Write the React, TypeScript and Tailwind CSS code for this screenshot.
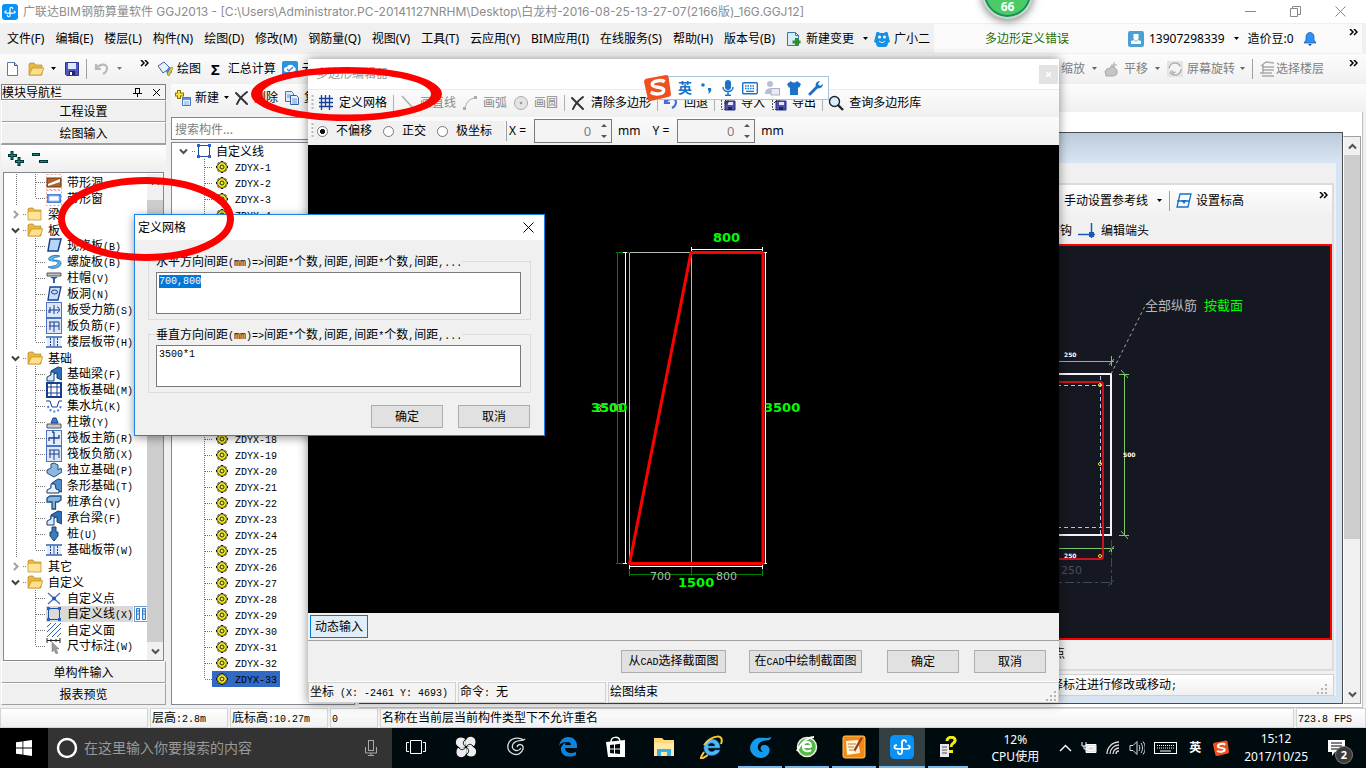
import React, { useEffect, useRef } from "react";

const MONO = /([\x20-\x7e]+)/;

/* Ideographs at 12px with half-width Latin between them. */
function Song({ text }: { text: string }) {
  return (
    <span className="whitespace-pre font-['Noto_Sans_CJK_SC',sans-serif] text-[12px] leading-4">
      {text.split(MONO).map((part, i) =>
        i % 2 ? (
          <span key={i} className="font-['Liberation_Mono',monospace] text-[10px]">{part}</span>
        ) : (
          part
        )
      )}
    </span>
  );
}

function Svg({ w = 16, h = 16, children, className = "" }: { w?: number; h?: number; children: React.ReactNode; className?: string }) {
  return (
    <svg width={w} height={h} viewBox={`0 0 ${w} ${h}`} fill="none" className={`block shrink-0 ${className}`} aria-hidden="true">
      {children}
    </svg>
  );
}

const Caret = ({ color = "#000" }: { color?: string }) => (
  <Svg w={7} h={4}><path d="M1 0h5L3.5 3z" fill={color} /></Svg>
);
const More = () => (
  <Svg w={9} h={7}><path d="M1 0l3 3-3 3M5 0l3 3-3 3" stroke="#000" strokeWidth="1.5" /></Svg>
);
const Sep = () => <span className="block h-5 w-px shrink-0 bg-[#a0a0a0]" />;
const Grip = () => (
  <Svg w={3} h={16}><path d="M1.5 0v16" stroke="#b8b8b8" strokeWidth="2" strokeDasharray="2 2" /></Svg>
);
const Cross = () => (
  <Svg><path d="M2 3l11 11M13 2C9 5 5 9 3 14" stroke="#303438" strokeWidth="2" strokeLinecap="round" /></Svg>
);
const FileIcon = () => (
  <Svg><path d="M2.500 1.500h7l3 3v10h-10z" fill="#fff" stroke="#5b7ba8" /><path d="M9.500 1.500v3h3" fill="#c9dbf3" stroke="#34537e" /></Svg>
);
const FolderIcon = ({ open = false }: { open?: boolean }) => (
  <Svg>
    <path d="M1 3l1-1h4l2 2h6v10H1z" fill="#e9b843" stroke="#b98a28" strokeWidth=".7" />
    {open ? <path d="M1 14L4.500 7H16l-3 7z" fill="#ffe08a" stroke="#bd8b25" strokeWidth=".7" /> : <path d="M1.500 6h12v7.500h-12z" fill="#ffe49a" />}
  </Svg>
);
const SaveIcon = () => (
  <Svg><path d="M1.500 1.500h13v13h-12l-1-1z" fill="#4f57c5" stroke="#30378d" /><path d="M4 2h8v6H4z" fill="#dfe9fb" /><path d="M5 10h6v4H5z" fill="#20255f" /><path d="M6 11h2v3H6z" fill="#fff" /></Svg>
);
const UndoIcon = ({ color = "#b9b9b9" }: { color?: string }) => (
  <Svg><path d="M2 3v5h5M2.500 7.500C5 3 13 2 13 7c0 3-2 5-4 6" stroke={color} strokeWidth="2.200" /></Svg>
);
const CopyIcon = () => (
  <Svg><path d="M1.500 1.500h6l2 2v8h-8z" fill="#dce9fb" stroke="#4474b8" /><path d="M6.500 5.500h6l2 2v7h-8z" fill="#eaf2fd" stroke="#2f5fa8" /><path d="M3 5h3M3 7h3M8 9h5M8 11h5M8 13h5" stroke="#6a93cc" /></Svg>
);
const PaletteIcon = () => (
  <Svg><path d="M1 5l6-4 6 6-7 5z" fill="#eaf1fb" stroke="#3e6396" /><path d="M9 10l3-4 3 5-4 4z" fill="#2f8ee0" /><path d="M10 13l4-7 2 1-4 8z" fill="#e5c34c" stroke="#8a6a10" strokeWidth=".5" /></Svg>
);
const NewPartIcon = () => (
  <Svg><path d="M4 0v9M0 4.500h9" stroke="#8f7400" strokeWidth="4" /><path d="M4 1v7M1 4.500h7" stroke="#f7df3e" strokeWidth="2" /><path d="M7.500 7.500h8v8h-8z" fill="#e8f1ff" stroke="#3f78c8" /><path d="M8 8h7v2H8z" fill="#5c98e6" /><path d="M9 12h5M9 14h5" stroke="#80aade" /></Svg>
);
const CloudCheck = () => (
  <Svg><rect width="16" height="16" rx="2" fill="#2b93dd" /><path d="M2 9c0-3 2-3 3-3 1-3 6-3 7 0 3 1 2 5-1 5H5c-2 0-3-1-3-2z" fill="#fff" /><path d="M5 8l2 2 4-4" stroke="#2b93dd" strokeWidth="1.500" /></Svg>
);
const GridIcon = () => (
  <Svg><path d="M3.500 0v15M7.500 0v12M11.500 0v15M1 3.500h14M1 7.500h14M1 11.500h14" stroke="#173f9d" strokeWidth="1.300" /></Svg>
);
const MagnifierIcon = () => (
  <Svg><circle cx="6.500" cy="6.500" r="5" fill="#d7effb" stroke="#222" strokeWidth="1.400" /><path d="M10 10l5 5" stroke="#222" strokeWidth="2.400" /></Svg>
);
const DiskArrow = ({ out = false }: { out?: boolean }) => (
  <Svg><path d="M1.500 5v9.500H6" stroke="#555" strokeDasharray="2 1" /><path d="M5 6h10v9H5z" fill="#4d50b0" stroke="#2c2f7d" /><path d="M8 7h5v3H8z" fill="#e6e8f8" /><path d="M8 12h4v3H8z" fill="#20225c" /><path d={out ? "M3 8l4-4M4 3h4v4" : "M3 3l4 4M8 4v4H4"} stroke="#333" /></Svg>
);
const GlodonLogo = ({ size = 16 }: { size?: number }) => (
  <svg width={size} height={size} viewBox="0 0 16 16" fill="none" className="block shrink-0" aria-hidden="true">
    <rect width="16" height="16" rx="3" fill="#0a91f5" />
    <path d="M8 11.500V5c0-2.200 2.700-2 2.700-.4M4.200 6.800c-1.700.3-1.700 2.400.3 2.400h7.300c1.800 0 1.800-1.800.4-2.200M5.300 11.200c.3 2.200 2.700 1.800 2.700.2" stroke="#fff" strokeWidth="1.200" strokeLinecap="round" />
  </svg>
);
const SogouLogo = ({ size = 16 }: { size?: number }) => (
  <svg width={size} height={size} viewBox="0 0 28 28" fill="none" className="block shrink-0" aria-hidden="true">
    <path d="M2 5l21-4q2 0 2.500 2L28 21q0 2-2 2.500L7 28q-3 0-3-2L0 8q0-2 2-3z" fill="#f0501e" />
    <path d="M21.500 8c-4-2.500-13-1-13 3 0 4 12.500 1.500 12 6-.4 4.300-9 4.700-13.500 2" stroke="#fff" strokeWidth="3.500" />
  </svg>
);
const Chevron = ({ dir, color = "#505050" }: { dir: "up" | "down" | "right"; color?: string }) => (
  <Svg w={9} h={9}><path d={dir === "up" ? "M1 6.500L4.500 3 8 6.500" : dir === "down" ? "M1 2.500L4.500 6 8 2.500" : "M3 1l3.500 3.500L3 8"} stroke={color} strokeWidth="2" /></Svg>
);

const dark = "#173f8f";
const glyphs: Record<string, React.ReactNode> = {
  hole: <><rect x=".5" y=".5" width="15" height="15" stroke="#e8a090" strokeDasharray="2 2" /><path d="M1 4h14v9H1z" fill="#b0642b" stroke="#6e3610" /><path d="M2 10l12-5v3L2 12z" fill="#fff" /></>,
  window: <><rect x=".5" y=".5" width="15" height="15" stroke="#e8a090" strokeDasharray="2 2" /><path d="M1 4h14v9H1z" fill="#4d80df" /><path d="M3 6h10v5H3z" fill="#fff" stroke="#9fc0f6" /></>,
  slab: <path d="M4 1h11l-3 12H2z" fill="#b7d5f7" stroke={dark} strokeWidth="1.500" />,
  spiral: <path d="M14 2C8 0 1 3 3 6c2 2 9 0 9 3s-6 3-10 4c5 3 13 1 13-4 0-4-8-2-8-4s4-1 7-3z" fill="#58b6ea" stroke="#2166ac" strokeWidth=".8" />,
  cap: <><path d="M1 3h14v3H1z" fill="#bfc4ca" stroke="#555" /><path d="M4 7h8l-3 2v4H7V9z" fill="#2763b5" /></>,
  slabhole: <><path d="M4 1h11l-3 13H2z" fill="#c7ddf8" stroke={dark} strokeWidth="1.300" /><ellipse cx="8.500" cy="6" rx="3" ry="2" stroke={dark} /></>,
  bars: <><rect x=".5" y=".5" width="15" height="15" fill="#dce7fa" stroke="#4b74c4" /><path d="M3 11V8h11M8 3v9M4 5v6M11 5c3 0 3 5 0 6" stroke={dark} /></>,
  frame: <><rect x=".5" y=".5" width="15" height="15" fill="#dce7fa" stroke="#4b74c4" /><path d="M3 4h10M3 8h10M8 4v10M4 4v8M13 4v8" stroke={dark} /></>,
  strip: <><path d="M0 3h16M0 13h16" stroke="#2d5fb4" strokeWidth="1.500" /><path d="M1 4h14v8H1z" fill="#e2ecfc" /><path d="M4.500 4v8M11.500 4v8" stroke={dark} strokeDasharray="2 1" /><path d="M8 4v8" stroke={dark} strokeWidth=".8" /></>,
  beam: <><path d="M5 9V5l7-4 4 1v12l-5-2V7z" fill="#2f6fb5" stroke="#123c77" /><path d="M1 15v-4l4-2V6h3v9z" fill="#dce9f8" stroke="#123c77" /></>,
  raft: <><rect x="1" y="1" width="14" height="14" stroke={dark} strokeWidth="2" /><path d="M5 1v14M11 1v14M1 5h14M1 11h14" stroke={dark} /></>,
  pit: <><path d="M0 3h4l2 6h5l2-6h3" stroke={dark} /><path d="M2 8c1 7 12 8 13-1" stroke="#4a8ad0" strokeWidth="2" strokeDasharray="2 2" /></>,
  pier: <><path d="M1 10h14v4H1z" fill="#c9cdd2" stroke="#555" /><path d="M5 9l2-5h3l2 5z" fill="#3f7fd2" stroke={dark} /></>,
  rebar: <><rect x=".5" y=".5" width="15" height="15" fill="#e4edfc" stroke="#4b74c4" /><path d="M3 11V8h10V5M8 2v12M6 2h2" stroke={dark} strokeWidth="1.300" /></>,
  single: <path d="M1 8l4-2V2l3-1 4 2v5l3-2 1 4-8 5-7-4z" fill="#8cb8e0" stroke="#1f4f80" />,
  stripbase: <><path d="M5 9l1-4 6-4 4 1v12l-5-1z" fill="#4e8ccb" stroke="#123c77" /><path d="M1 15v-3l4-2V6h4l1 5 3 1v3z" fill="#e8f1fb" stroke="#123c77" /></>,
  pilecap: <path d="M1 4l3-2h11v4l-3 2H9.500v7H6V8H1z" fill="#88b4df" stroke="#1f4f80" strokeWidth="1.300" />,
  pile: <path d="M6 1h4v5h2v4l-4 5-4-5V6h2z" fill="#3f7ab9" stroke="#153f73" />,
  point: <><path d="M2 3l12 11M14 3L2 14" stroke="#4a6eb0" strokeWidth="1.300" /><circle cx="8" cy="8.500" r="2" fill="#1c57c8" /></>,
  line: <><path d="M2.500 2.500h11v11h-11z" stroke="#1c4fa8" /><path d="M1 1h3v3H1zM12 1h3v3h-3zM1 12h3v3H1zM12 12h3v3h-3z" fill="#2b62c8" /></>,
  area: <path d="M1 5l4-4M1 10l9-9M1 15L15 1M6 15l9-9M11 15l4-4" stroke="#2b62c8" />,
  dim: <><path d="M1 0v5M14 0v5M1 2.500h13M5 1v3M10 1v3" stroke="#222" /><path d="M6 4v10l2-2 2 4 2-1-2-4h3z" fill="#9a9a9a" stroke="#777" strokeWidth=".5" /></>,
};

type Row = { t: string; i?: string; open?: boolean; last?: boolean; noTrunk?: boolean; sel?: boolean };
const navRows: Row[] = [
  { t: "带形洞", i: "hole" },
  { t: "带形窗", i: "window", last: true },
  { t: "梁", open: false },
  { t: "板", open: true },
  { t: "现浇板(B)", i: "slab" },
  { t: "螺旋板(B)", i: "spiral" },
  { t: "柱帽(V)", i: "cap" },
  { t: "板洞(N)", i: "slabhole" },
  { t: "板受力筋(S)", i: "bars" },
  { t: "板负筋(F)", i: "frame" },
  { t: "楼层板带(H)", i: "strip", last: true },
  { t: "基础", open: true },
  { t: "基础梁(F)", i: "beam" },
  { t: "筏板基础(M)", i: "raft" },
  { t: "集水坑(K)", i: "pit" },
  { t: "柱墩(Y)", i: "pier" },
  { t: "筏板主筋(R)", i: "rebar" },
  { t: "筏板负筋(X)", i: "frame" },
  { t: "独立基础(P)", i: "single" },
  { t: "条形基础(T)", i: "stripbase" },
  { t: "桩承台(V)", i: "pilecap" },
  { t: "承台梁(F)", i: "beam" },
  { t: "桩(U)", i: "pile" },
  { t: "基础板带(W)", i: "strip", last: true },
  { t: "其它", open: false },
  { t: "自定义", open: true },
  { t: "自定义点", i: "point", noTrunk: true },
  { t: "自定义线(X)", i: "line", noTrunk: true, sel: true },
  { t: "自定义面", i: "area", noTrunk: true },
  { t: "尺寸标注(W)", i: "dim", noTrunk: true, last: true },
];

function NavRow({ r }: { r: Row }) {
  if (!r.i)
    return (
      <li className="flex h-4 items-center">
        <span className="flex w-[23px] shrink-0 items-center justify-between pl-[7px]">
          <Chevron dir={r.open ? "down" : "right"} color={r.open ? "#404040" : "#a0a0a0"} />
          <Svg w={4} h={1}><path d="M0 .5h4" stroke="#808080" strokeDasharray="1 1" /></Svg>
        </span>
        <FolderIcon open={r.open} />
        <span className="pl-[5px]"><Song text={r.t} /></span>
      </li>
    );
  return (
    <li className="flex h-4 items-center">
      <Svg w={42}>
        {!r.noTrunk && <path d="M12.500 0v16" stroke="#707070" strokeDasharray="1 1" />}
        <path d={`M31.500 0v${r.last ? 8 : 16}M32 8.500h10`} stroke="#707070" strokeDasharray="1 1" />
      </Svg>
      <span className={`flex h-4 items-center gap-[5px] ${r.sel ? "bg-[#d9d9d9]" : ""}`}>
        <Svg>{glyphs[r.i]}</Svg>
        <Song text={r.t} />
      </span>
      {r.sel && (
        <Svg w={14} className="ml-px"><rect x=".5" y=".5" width="13" height="15" fill="#fff" stroke="#7a9cc8" /><path d="M2.500 2.500h3v11h-3zM8.500 2.500h3v11h-3z" fill="#cfe4fb" stroke="#2b78d0" /><path d="M3 5h2M3 8h2M9 5h2M9 8h2" stroke="#2b78d0" /></Svg>
      )}
    </li>
  );
}

function WideButton({ children }: { children: string }) {
  return (
    <button className="h-[22px] w-full border border-[#a0a0a0] border-l-white border-t-white bg-[#f0f0f0] text-center"><Song text={children} /></button>
  );
}

function ScrollBar({ thumb }: { thumb: string }) {
  return (
    <div className="flex w-4 shrink-0 flex-col items-center bg-[#f0f0f0]">
      <span className="flex h-[18px] items-center"><Chevron dir="up" /></span>
      <span className={`w-full bg-[#cdcdcd] ${thumb}`} />
      <span className="mt-auto flex h-[18px] items-center"><Chevron dir="down" /></span>
    </div>
  );
}

function NavPanel() {
  return (
    <aside className="flex w-[167px] shrink-0 flex-col pl-px pr-px pb-[3px]">
      <header className="flex h-4 items-center justify-between border border-[#808080] bg-[#f4f4f4] pr-1">
        <Song text="模块导航栏" />
        <span className="flex items-center gap-2.5">
          <Svg w={9} h={10}><path d="M2.500 1v5M6.500 1v5M2 1.500h5M0 6.500h9M4.500 7v3" stroke="#000" /></Svg>
          <Svg w={9} h={9}><path d="M1 1l7 7M8 1L1 8" stroke="#000" /></Svg>
        </span>
      </header>
      <WideButton>工程设置</WideButton>
      <WideButton>绘图输入</WideButton>
      <div className="flex h-7 items-center gap-2 border-t border-[#a0a0a0] bg-gradient-to-b from-white to-[#eeeeee] pl-[7px]">
        <Svg><path d="M4 0v9M0 4.500h9M11 6v9M7 10.500h9" stroke="#033" strokeWidth="3" /><path d="M4 1v7M1 4.500h7M11 7v7M8 10.500h7" stroke="#178a82" /></Svg>
        <Svg><path d="M0 3.500h8M7 10.500h9" stroke="#033" strokeWidth="3" /><path d="M1 3.500h6M8 10.500h7" stroke="#178a82" /></Svg>
      </div>
      <div className="ml-0.5 mr-0.5 flex min-h-0 flex-1 border border-[#828790] bg-white pt-px">
        <ul className="min-w-0 flex-1 overflow-hidden">{navRows.map((r, i) => <NavRow key={i} r={r} />)}</ul>
        <ScrollBar thumb="mt-2 h-[446px]" />
      </div>
      <WideButton>单构件输入</WideButton>
      <WideButton>报表预览</WideButton>
    </aside>
  );
}

function PartsPanel() {
  return (
    <section className="flex w-[184px] shrink-0 flex-col gap-0.5 pb-[3px]">
      <div className="mt-[5px] h-[23px] shrink-0 border border-[#828790] bg-white">
        <input aria-label="搜索构件" placeholder="搜索构件..." className="block h-full w-full pl-[3px] font-['Noto_Sans_CJK_SC',sans-serif] text-[12px] leading-4 outline-none placeholder:text-[#808080]" />
      </div>
      <div className="min-h-0 flex-1 overflow-hidden border border-[#828790] bg-white">
        <div className="flex h-4 items-center pl-[7px]">
          <Chevron dir="down" />
          <Svg w={8} h={1}><path d="M4 .5h4" stroke="#707070" strokeDasharray="1 1" /></Svg>
          <Svg>{glyphs.line}</Svg>
          <span className="pl-1"><Song text="自定义线" /></span>
        </div>
        <ul>
          {Array.from({ length: 33 }, (_, i) => (
            <li key={i} className="flex h-4 items-center pl-8">
              <Svg w={8}><path d={`M.5 0v${i === 32 ? 8 : 16}M1 8.500h7`} stroke="#707070" strokeDasharray="1 1" /></Svg>
              <span className={`flex h-4 items-center gap-1.5 px-[3px] ${i === 32 ? "bg-[#316ac5]" : ""}`}>
                <Svg w={14} h={14}>
                  <path d="M7 1v12M1 7h12M3 3l8 8M11 3l-8 8" stroke="#1a1a1a" strokeWidth="2.600" />
                  <circle cx="7" cy="7" r="4.500" fill="#f5ea1c" stroke="#3a3a10" strokeWidth=".8" />
                  <path d="M7 2v10M2 7h10M3.500 3.500l7 7M10.500 3.500l-7 7" stroke="#f5ea1c" />
                  <circle cx="7" cy="7" r="2" fill="#f5ea1c" stroke="#2a2a2a" />
                </Svg>
                <Song text={`ZDYX-${i + 1}`} />
              </span>
            </li>
          ))}
        </ul>
      </div>
    </section>
  );
}

function SizeGrip() {
  return <Svg w={12} h={12} className="ml-auto self-end"><path d="M8 1h2v2H8zM4 5h2v2H4zM8 5h2v2H8zM0 9h2v2H0zM4 9h2v2H4zM8 9h2v2H8z" fill="#b4b4b4" /></Svg>;
}

function SectionWindow() {
  return (
    <div className="flex min-w-0 flex-1 flex-col border border-[#494c50] bg-gradient-to-b from-[#bccbdb] via-[#d7e4f2] via-[5%] to-[#d7e4f2] pb-[7px] pr-1.5 pt-[30px]">
      <div className="flex min-h-0 flex-1 flex-col bg-[#f0f0f0] pr-0.5 pt-5">
        <div className="flex min-h-0 flex-1 flex-col border-2 border-[#dcdcdc] bg-[#f0f0f0]">
          <div className="flex h-8 shrink-0 items-center justify-end gap-1.5 whitespace-nowrap bg-gradient-to-b from-white to-[#f0f0f0] pr-1">
            <span className="pr-0.5">手动设置参考线</span>
            <Caret />
            <Sep />
            <span className="flex items-center gap-1">
              <Svg><path d="M4 1h11l-3 13H1zM1 8h13" stroke="#1473c8" strokeWidth="1.300" /><path d="M5 7h6l-3 4z" fill="#1473c8" /></Svg>
              设置标高
            </span>
            <span className="-mt-3 pl-[69px]"><More /></span>
          </div>
          <div className="flex h-[27px] shrink-0 items-center justify-end pr-[183px]">
            <span>弯钩</span>
            <Svg w={17} className="mx-1.5"><path d="M0 11.500h17M13.500 0v15" stroke="#1c57b8" strokeWidth="1.500" /><path d="M11 9h5v5h-5z" fill="#1c57b8" /></Svg>
            <span>编辑端头</span>
          </div>
          <div className="flex h-[396px] shrink-0 justify-end overflow-hidden border-2 border-[#f00] bg-[#151820]">
            <svg width="300" height="392" viewBox="1030 246 300 392" fill="none" className="block shrink-0 font-['DejaVu_Sans',sans-serif]">
              <path d="M1029 361.500h85M1029 548.500h85M1124.500 374v161" stroke="#7fc866" />
              <path d="M1111.500 356v10M1109 365l5-6M1119 374.500h10M1121 370l7 8M1119 535.500h10M1121 531l7 8M1111.500 543v10M1109 552l5-6" stroke="#7fc866" />
              <path d="M1029 374h82v161h-82" stroke="#f4f4f4" strokeWidth="2" />
              <path d="M1029 385.500h84M1100.500 376v160M1029 527.500h82" stroke="#a8c8ee" strokeDasharray="4 3" />
              <path d="M1029 382h71q3 0 3 3v171q0 3-3 3h-71" stroke="#c8141c" strokeWidth="2" />
              <g stroke="#f6e235"><circle cx="1100" cy="385" r="1.500" /><circle cx="1100" cy="464" r="1.500" /><circle cx="1100" cy="556" r="1.500" /></g>
              <path d="M1111 374l34-68" stroke="#a8a8a8" strokeDasharray="3 3" />
              <path d="M1111.500 540v48M1029 582.500h82M1108 586l6-6" stroke="#424855" strokeDasharray="9 3 3 3" />
              <text x="1145" y="310" fontSize="13" fill="#b9b9b9" className="font-['Noto_Sans_CJK_SC',sans-serif]">全部纵筋</text>
              <text x="1204" y="310" fontSize="13" fill="#0f0" className="font-['Noto_Sans_CJK_SC',sans-serif]">按截面</text>
              <g fontSize="6" fontWeight="700" fill="#fff"><text x="1064" y="357">250</text><text x="1064" y="558">250</text><text x="1123" y="457">500</text></g>
              <text x="1061" y="574" fontSize="11" fill="#4a4e58">250</text>
            </svg>
          </div>
          <div className="flex flex-1 items-start justify-end pr-[267px] pt-1.5">修改顶点</div>
        </div>
        <div className="mt-[3px] flex h-[22px] shrink-0 items-center border border-[#d0d0d0] bg-gradient-to-b from-white to-[#f0f0f0] pr-1">
          <span className="ml-auto pr-[140px]"><Song text="选择标注进行修改或移动;" /></span>
          <span className="self-end"><SizeGrip /></span>
        </div>
      </div>
    </div>
  );
}

const menus = ["文件(F)", "编辑(E)", "楼层(L)", "构件(N)", "绘图(D)", "修改(M)", "钢筋量(Q)", "视图(V)", "工具(T)", "云应用(Y)", "BIM应用(I)", "在线服务(S)", "帮助(H)", "版本号(B)"];

function MenuBar() {
  return (
    <nav className="flex h-[31px] shrink-0 items-center whitespace-nowrap pr-1">
      <div className="flex items-center gap-[11px] pl-[7px]">
        {menus.map((m) => <button key={m}>{m}</button>)}
        <button className="flex items-center gap-1">
          <Svg><path d="M1.500 1.500h8l3 3v10h-11z" fill="#d9ecf9" stroke="#2f7ca8" /><path d="M9.500 1.500v3h3" stroke="#2f7ca8" /><path d="M10.500 7v8M6.500 11h8" stroke="#2d9414" strokeWidth="3" /></Svg>
          新建变更
          <span className="pl-1"><Caret /></span>
        </button>
        <button className="-ml-1.5 flex items-center gap-1">
          <Svg><path d="M2 3c0-3 3-2 4-1h4c1-1 4-2 4 1 0 2 1 2 1 4l1 4-2 1c0 2-1 4-3 4H5c-2 0-3-2-3-4l-2-1 1-4c0-2 1-2 1-4z" fill="#1791e8" /><circle cx="5.500" cy="6" r="1.500" fill="#fff" /><circle cx="10.500" cy="6" r="1.500" fill="#fff" /><path d="M5 10c2 2 4 2 6 0" stroke="#fff" /></Svg>
          广小二
        </button>
      </div>
      <div className="ml-auto flex h-[29px] w-[188px] items-center justify-center bg-[#fafafa]"><span className="pr-0.5 text-[#2b6a00]">多边形定义错误</span></div>
      <div className="flex h-[29px] w-[240px] items-center bg-[#fafafa] pl-1.5">
        <Svg><rect width="16" height="16" rx="2" fill="#4a9fd4" /><path d="M5.500 3h5v5l-2.500 2-2.500-2zM3 13v-3l3-1 2 2 2-2 3 1v3z" fill="#fff" /></Svg>
        <span className="pl-[5px] pr-2">13907298339</span>
        <Caret />
        <span className="pl-2 pr-2">造价豆:0</span>
        <Svg><path d="M2 12l2-3V6c0-6 8-6 8 0v3l2 3z" fill="#2f8ffb" stroke="#14519c" strokeWidth=".7" /><path d="M6 13h4l-2 2z" fill="#14519c" /></Svg>
        <span className="-mt-3 ml-auto mr-1"><More /></span>
      </div>
    </nav>
  );
}

function MainToolbar() {
  return (
    <div className="flex h-[30px] shrink-0 items-center overflow-hidden whitespace-nowrap bg-gradient-to-b from-[#fcfcfc] to-[#f0f0f0] pl-[5px] pr-2">
      <div className="flex w-[152px] shrink-0 items-center">
        <FileIcon />
        <span className="pl-[7px]"><FolderIcon open /></span>
        <span className="pl-[6px] pr-[7px]"><Caret /></span>
        <SaveIcon />
        <span className="pl-[6px] pr-[7px]"><Sep /></span>
        <UndoIcon />
        <span className="pl-1.5"><Caret color="#777" /></span>
        <span className="-mt-3 ml-auto mr-2"><More /></span>
      </div>
      <button className="flex items-center gap-1"><PaletteIcon />绘图</button>
      <button className="flex items-center gap-2 pl-2.5"><span className="text-[15px] font-bold">Σ</span>汇总计算</button>
      <button className="flex items-center gap-1 pl-1.5"><CloudCheck />云检查</button>
      <div className="ml-auto flex items-center gap-1.5 text-[#808080]">
        <span>缩放</span>
        <Caret color="#666" />
        <span className="flex items-center gap-1"><Svg><path d="M2 15l-1-5 3-3 2 1 1-3 3 1 3 3v4l-3 2zM10 1v6M7 4h6" fill="#c4c4c4" stroke="#aaa" /></Svg>平移</span>
        <Caret color="#666" />
        <span className="flex items-center gap-1"><Svg><rect width="16" height="16" fill="#e4e4e4" /><circle cx="8" cy="8" r="6" fill="#f4f4f4" stroke="#b0b0b0" strokeWidth="1.500" strokeDasharray="15 4" /><path d="M3 10h3v3M5 12l4-1" stroke="#aaa" /></Svg>屏幕旋转<Caret color="#666" /></span>
        <Sep />
        <span className="flex items-center gap-px"><Svg><path d="M2 5l5-4 8 1M3 6h12M3 9h12M1 12h12M3 15h12M4 4v9" stroke="#aaa" strokeWidth="1.500" /></Svg>选择楼层</span>
        <span className="-mt-3 pl-[19px]"><More /></span>
      </div>
    </div>
  );
}

function Tool({ icon, label, off = false }: { icon: React.ReactNode; label: string; off?: boolean }) {
  return <button disabled={off} className={`flex items-center gap-[5px] px-[3px] ${off ? "text-[#8a8a8a]" : ""}`}>{icon}{label}</button>;
}
const ToolSep = () => <span className="ml-[3px] mr-0.5 h-4 w-px shrink-0 bg-[#b0b0b0]" />;

function Radio({ label, checked = false }: { label: string; checked?: boolean }) {
  return (
    <label className="flex items-center gap-2">
      <input type="radio" name="offset" defaultChecked={checked} className="size-[11px] appearance-none rounded-full border border-[#777] bg-white checked:bg-[radial-gradient(#111_0_35%,#fff_45%)]" />
      {label}
    </label>
  );
}

function Coord({ axis }: { axis: string }) {
  return (
    <label className="flex items-center">
      {axis} =
      <span className="ml-2 flex h-6 w-[78px] items-center border border-[#7a7a7a] bg-[#f4f4f4] pr-1">
        <input defaultValue="0" className="w-full min-w-0 bg-transparent pr-2.5 text-right text-[13px] text-[#808080] outline-none" />
        <Svg w={6} h={16}><path d="M0 4l3-3 3 3zM0 12l3 3 3-3z" fill="#555" /></Svg>
      </span>
      <span className="pl-1.5">mm</span>
    </label>
  );
}

function GreyButton({ children, w }: { children: string; w: string }) {
  return <button className={`h-[23px] border border-[#adadad] bg-[#e1e1e1] ${w}`}><Song text={children} /></button>;
}

function PolygonEditor() {
  return (
    <section className="absolute left-[308px] top-[59px] flex w-[751px] flex-col bg-[#f0f0f0] shadow-[0_0_10px_rgba(0,0,0,0.45)]">
      <header className="flex h-[30px] items-center justify-between bg-white pl-2 pr-px text-[#999]">
        <h2>多边形编辑器</h2>
        <button aria-label="关闭" className="flex size-[19px] items-center justify-center bg-[#e3e3e3]"><Svg w={5} h={5}><path d="M0 0l5 5M5 0L0 5" stroke="#fff" strokeWidth="1.500" /></Svg></button>
      </header>
      <div className="flex h-7 items-center whitespace-nowrap border-t border-[#ececec] bg-gradient-to-b from-[#fbfbfb] to-[#f0f0f0] pb-px pl-[3px]">
        <Grip />
        <span className="pl-px"><Tool icon={<GridIcon />} label="定义网格" /></span>
        <ToolSep />
        <Tool off icon={<Svg><path d="M3 1l11 12" stroke="#aaa" strokeWidth="1.500" /></Svg>} label="画直线" />
        <Tool off icon={<Svg><path d="M3 14C4 7 8 3 14 3" stroke="#aaa" /><path d="M1 12h3v3H1zM12 1h3v3h-3z" fill="#aaa" /></Svg>} label="画弧" />
        <Tool off icon={<Svg><circle cx="8" cy="8" r="6.500" fill="#e4e4e4" stroke="#aaa" /><circle cx="8" cy="8" r="1.300" fill="#999" /></Svg>} label="画圆" />
        <ToolSep />
        <Tool icon={<Cross />} label="清除多边形" />
        <ToolSep />
        <Tool icon={<UndoIcon color="#4a6ed0" />} label="回退" />
        <ToolSep />
        <Tool icon={<DiskArrow />} label="导入" />
        <Tool icon={<DiskArrow out />} label="导出" />
        <ToolSep />
        <Tool icon={<MagnifierIcon />} label="查询多边形库" />
      </div>
      <div className="flex h-7 items-center whitespace-nowrap bg-gradient-to-b from-[#fbfbfb] to-[#f0f0f0] pl-[3px]">
        <Grip />
        <div className="flex h-5 items-center gap-[11px] bg-[#f0f0f0] pl-[3px] pr-3">
          <Radio label="不偏移" checked />
          <Radio label="正交" />
          <Radio label="极坐标" />
        </div>
        <span className="pl-0.5 pr-0.5"><Sep /></span>
        <Coord axis="X" />
        <span className="pl-3"><Coord axis="Y" /></span>
      </div>
      <svg viewBox="308 145 751 468" fill="none" className="block h-[468px] w-full bg-black font-['DejaVu_Sans',sans-serif]">
        <path d="M629.500 563V252.500H691.500V563" stroke="#b8b8b8" />
        <path d="M617.500 252v312M616 252.500h14M616 563.500h10M629 574.500h134M629.500 565v11M691.500 565v11M762.500 565v11" stroke="#008000" />
        <path d="M625.500 252v312M623 252.500h4M623 563.500h4M691 249.500h72M691.500 247v4M762.500 247v4M765.500 252v312M764 252.500h3M764 563.500h3M629 566.500h134M629.500 565v4M762.500 565v4" stroke="#fff" />
        <text x="595" y="412" fontSize="11" fill="#b8b8b8">3500</text>
        <path d="M691 252.500h72V563.500H629.500Z" stroke="#f00" strokeWidth="3" strokeLinejoin="bevel" />
        <g fontSize="11" fill="#b8b8b8"><text x="650" y="580">700</text><text x="716" y="580">800</text></g>
        <g fontSize="13" fontWeight="700" fill="#0f0"><text x="713" y="242">800</text><text x="591" y="412">3500</text><text x="764" y="412">3500</text><text x="678" y="587">1500</text></g>
      </svg>
      <div className="flex h-7 items-center border-b border-[#a0a0a0] pl-0.5">
        <button className="h-[23px] w-[58px] border border-[#0078d7] bg-[#e0eef9]">动态输入</button>
      </div>
      <div className="flex h-[41px] items-center justify-end border-b border-white pr-[13px]">
        <span className="mr-[23px]"><GreyButton w="w-[105px]">从CAD选择截面图</GreyButton></span>
        <span className="mr-[25px]"><GreyButton w="w-[113px]">在CAD中绘制截面图</GreyButton></span>
        <span className="mr-[15px]"><GreyButton w="w-[72px]">确定</GreyButton></span>
        <GreyButton w="w-[72px]">取消</GreyButton>
      </div>
      <footer className="flex h-[21px] gap-0.5 bg-[#f4f4f4]">
        <span className="w-[148px] border border-[#d0d0d0] pl-px"><Song text="坐标 (X: -2461 Y: 4693)" /></span>
        <span className="w-[148px] border border-[#d0d0d0] pl-px"><Song text="命令: 无" /></span>
        <span className="flex flex-1 border border-[#d0d0d0] pl-px"><Song text="绘图结束" /><SizeGrip /></span>
      </footer>
    </section>
  );
}

function GridDialog() {
  const first = useRef<HTMLTextAreaElement>(null);
  useEffect(() => {
    first.current?.focus();
    first.current?.select();
  }, []);
  const area = "block h-[42px] w-full resize-none border border-[#7a7a7a] bg-white px-0.5 pt-0.5 font-['Liberation_Mono',monospace] text-[10px] leading-[13px] outline-none selection:bg-[#0078d7] selection:text-white";
  return (
    <section role="dialog" aria-label="定义网格" className="absolute left-[134px] top-[214px] w-[411px] border border-[#1883e8] bg-[#f0f0f0] pb-[7px] shadow-[0_2px_9px_rgba(0,0,0,0.4)]">
      <header className="flex h-[25px] items-center justify-between bg-white pl-[3px] pr-2.5">
        <h2>定义网格</h2>
        <button aria-label="关闭"><Svg w={11} h={11}><path d="M.5.500l10 10M10.500.500l-10 10" stroke="#000" /></Svg></button>
      </header>
      <div className="px-[13px] pt-[13px]">
        {[["水平方向间距(mm)=>间距*个数,间距,间距*个数,间距,...", "700,800"], ["垂直方向间距(mm)=>间距*个数,间距,间距*个数,间距,...", "3500*1"]].map(([label, value], i) => (
          <fieldset key={label} className={`min-w-0 border border-[#dcdcdc] px-[7px] pb-[5px] ${i ? "mt-1.5" : ""}`}>
            <legend className="h-4 whitespace-nowrap bg-[#f0f0f0] leading-4"><label htmlFor={`spacing-${i}`} className="block"><Song text={label} /></label></legend>
            <span className="block pr-0.5 pt-[3px]"><textarea id={`spacing-${i}`} ref={i ? undefined : first} defaultValue={value} className={area} /></span>
          </fieldset>
        ))}
        <div className="mt-3 flex justify-end gap-[15px] pr-px">
          <GreyButton w="w-[72px]">确定</GreyButton>
          <GreyButton w="w-[72px]">取消</GreyButton>
        </div>
      </div>
    </section>
  );
}

function ImeBar() {
  const blue = "#1c72c8";
  return (
    <div className="absolute left-[644px] top-[74px] flex items-center">
      <span className="z-10"><SogouLogo size={27} /></span>
      <div className="-ml-3 flex h-6 items-center gap-1.5 border border-[#a9c3dc] bg-white pl-[18px] pr-1">
        <span className="text-[14px] font-bold text-[#1c72c8]">英</span>
        <Svg><circle cx="5" cy="5" r="1.800" fill={blue} /><path d="M10 8h3c1 3-1 5-3 6 1-2 1-3 0-4z" fill={blue} /></Svg>
        <Svg><rect x="5" width="6" height="10" rx="3" fill={blue} /><path d="M3 7c0 6 10 6 10 0M8 12v3M5 15.300h6" stroke={blue} strokeWidth="1.500" /></Svg>
        <Svg><rect x=".7" y="2.700" width="14.600" height="11" rx="1" stroke={blue} strokeWidth="1.400" /><path d="M3 6h10M3 8.500h10" stroke={blue} strokeWidth="1.500" strokeDasharray="1.500 1" /><path d="M4 11.300h8" stroke={blue} strokeWidth="1.300" /></Svg>
        <Svg><circle cx="6" cy="4" r="3" fill="#b8bfd4" /><path d="M1 13c0-6 9-6 9-2v3H1z" fill="#b8bfd4" /><rect x="7" y="8.500" width="8.500" height="6.500" fill="#e8eaf2" stroke="#a8b0c8" /></Svg>
        <Svg><path d="M5 1c1 2 5 2 6 0l4 3-2 4-1-1v8H4V7L3 8 1 4z" fill={blue} /></Svg>
        <Svg><path d="M2 14l7-7" stroke={blue} strokeWidth="3" strokeLinecap="round" /><path d="M12 1C8 1 7 5 8 7c2 3 7 1 7-3l-3 2-2-2z" fill={blue} /></Svg>
      </div>
    </div>
  );
}

const slot = "flex h-full w-[47px] shrink-0 items-center justify-center border-b-2";
function Taskbar() {
  return (
    <footer className="flex h-10 shrink-0 items-center overflow-hidden bg-[#000b0f] text-white">
      <button aria-label="开始" className="flex h-full w-12 items-center justify-center bg-black"><Svg><path d="M0 2.300L6.500 1.400v6.200H0zM7.300 1.300L16 0v7.600H7.300zM0 8.400h6.500v6.200L0 13.700zM7.300 8.400H16V16l-8.700-1.300z" fill="#fff" /></Svg></button>
      <div className="flex h-full w-[344px] shrink-0 items-center gap-1.5 bg-[#333] pl-2 pr-3">
        <Svg w={22} h={22}><circle cx="11" cy="11" r="9" stroke="#fff" strokeWidth="2.400" /></Svg>
        <input aria-label="搜索" placeholder="在这里输入你要搜索的内容" className="min-w-0 flex-1 bg-transparent text-[14px] outline-none placeholder:text-[#999]" />
        <Svg w={18} h={18}><rect x="6.500" y="1.500" width="5" height="10" stroke="#aaa" /><path d="M3.500 8v6h11V8M9 14v3M6 16.500h6" stroke="#aaa" /></Svg>
      </div>
      <span className={`${slot} border-transparent`}><Svg w={20}><path d="M4.500 1.500h11v13h-11zM3 3.500H.5v9H3M17 3.500h2.500v9H17" stroke="#fff" /></Svg></span>
      <span className={`${slot} ml-[3px] border-transparent`}><Svg w={22} h={22}><path d="M10.500 10.500C5 13 0 10 1 5c1-5 9-4 9.500-1zM11.500 10.500C9 5 12 0 17 1c5 1 4 9 1 9.500zM11.500 11.500c5.500-2.500 10.500.5 9.500 5.500-1 5-9 4-9.500 1zM10.500 11.500c2.500 5.500-.5 10.500-5.500 9.500-5-1-4-9-1-9.500z" fill="#eee" /><path d="M11 3C7 6 8 9 11 11c3 2 4 5 0 8M3 11c3 4 6 3 8 0 2-3 5-4 8 0" stroke="#000b0f" /></Svg></span>
      <span className={`${slot} ml-[3px] border-transparent`}><Svg w={20} h={20}><path d="M18 3c-5-3-14-3-16 5-2 9 12 14 15 4 1-5-5-6-6-2M19 2c-3 3-9 0-12 5-3 6 5 9 8 4" stroke="#ddd" strokeWidth="1.300" /></Svg></span>
      <span className={`${slot} ml-[5px] border-transparent`}><Svg w={20} h={20}><path d="M1 9C2 3 6 0 10 0c6 0 9 4 9 9v2H7c0 5 6 6 11 4v3C10 22 2 18 3 11c1-3 3-5 6-6-5 0-7 2-8 4zM7 8h6c0-4-6-4-6 0z" fill="#0a84e0" /></Svg></span>
      <span className={`${slot} ml-px border-transparent`}><Svg w={22} h={22}><path d="M1 6l19-2v17H3z" fill="#fff" /><path d="M6 6c0-6 8-6 9-1" stroke="#fff" strokeWidth="1.500" /><path d="M5 9l4-.5v4H5zM10 8.400l5-.6v4.700h-5zM5 13.500h4v4l-4-.4zM10 13.500h5V18l-5-.5z" fill="#000b0f" /></Svg></span>
      <span className={`${slot} ml-px border-transparent`}><Svg w={22} h={20}><path d="M1 1h8l2 2h10v16H1z" fill="#ffd978" /><path d="M1 6h20v13H1z" fill="#ffe9a6" /><path d="M4 19v-7h14v7h-4v-4H8v4z" fill="#36b0e4" /></Svg></span>
      <span className={`${slot} border-transparent`}><Svg w={24} h={24}><path d="M12 4c6 0 9 4 9 9H9c0 4 5 5 7 2h5c-3 8-16 7-16-2 0-5 3-9 7-9zM9 11h7c0-4-7-4-7 0z" fill="#53b8f2" stroke="#1477c8" strokeWidth=".6" /><path d="M5 17C-2 28 4 23 9 20M22 9C26-2 13 0 5 10" stroke="#f6c93c" strokeWidth="2" /></Svg></span>
      <span className="ml-1 flex h-full gap-[3px]">
        <span className="flex h-full w-11 items-center justify-center border-b-2 border-[#76b9ed]"><Svg w={24} h={24}><path d="M23 2c-5 3-12-2-18 4-7 8 0 17 8 17 9 0 12-12 4-13-5-1-6 5-2 7-7 0-7-9 0-11 4-1 8 0 8-4z" fill="#149bee" /></Svg></span>
        <span className="flex h-full w-11 items-center justify-center border-b-2 border-[#76b9ed]"><Svg w={22} h={22}><circle cx="11" cy="11" r="9.500" fill="#54b948" stroke="#e8f6df" strokeWidth="1.500" /><path d="M7 10h8c0-6-8-5-8 1 0 5 6 5 8 3M6 11h9M18 1c-5 0-12 4-17 14" stroke="#fff" strokeWidth="2" /></Svg></span>
        <span className="flex h-full w-11 items-center justify-center border-b-2 border-[#76b9ed]"><Svg w={24} h={24}><rect x="1" y="1" width="22" height="22" rx="2" fill="#f38a13" stroke="#ffc766" /><path d="M4 6l12-1 2 13-13 2z" fill="#fff6dc" /><path d="M6 9h8M6 12h6M7 15h6" stroke="#b97b43" /><path d="M21 3l-8 14-1-3 7-12z" fill="#a23c18" /></Svg></span>
        <span className="flex h-full w-[46px] items-center justify-center border-b-2 border-[#76b9ed] bg-[#343f42]"><GlodonLogo size={24} /></span>
        <span className="flex h-full w-10 items-center justify-center border-b-2 border-[#76b9ed]"><Svg w={20} h={22}><path d="M2 8h9v13H2z" fill="#e8e8e8" /><path d="M4 11h5M4 14h5M4 17h5" stroke="#555" /><path d="M9 5c0-5 9-5 8 0-1 3-4 2-4 6" stroke="#f5ee14" strokeWidth="3" /><path d="M11 14h4v3h-4z" fill="#f5ee14" /></Svg></span>
      </span>
      <div className="ml-auto mr-5 flex items-center gap-3 text-[12px]">
        <div className="mr-2 whitespace-nowrap text-center leading-[17px]">12%<br />CPU使用</div>
        <div className="flex items-center gap-[9px]">
          <Svg w={13} h={8}><path d="M1 7l5.500-5.500L12 7" stroke="#fff" strokeWidth="1.400" /></Svg>
          <Svg><path d="M5 4.500h10v8H5zM7 6.500h6v4H7z" fill="#ddd" stroke="#fff" /><path d="M1 2v4h4V2M3 6v3h2" stroke="#fff" /></Svg>
          <Svg w={14} h={14}><path d="M1 13A12 12 0 0113 1M4 13a9 9 0 019-9M7 13a6 6 0 016-6M10 13a3 3 0 013-3" stroke="#ddd" strokeWidth="1.300" /></Svg>
          <Svg><path d="M1 5.500h3l4-4v13l-4-4H1zM10 5c1 2 1 4 0 6M12 3c2 3 2 7 0 10M14 1.500c3 4 3 9 0 13" stroke="#ddd" /></Svg>
          <Svg w={23} h={14}><rect x=".5" y="1.500" width="22" height="11" stroke="#fff" /><path d="M3 4.500h17M3 7h17" stroke="#fff" strokeDasharray="1 1" /><path d="M6 10h11" stroke="#fff" /></Svg>
        </div>
        <span className="font-bold">英</span>
        <SogouLogo />
        <time className="pl-[3px] text-center leading-[18px]">15:12<br />2017/10/25</time>
        <span className="relative ml-2">
          <Svg w={18} h={16}><path d="M0 0h17v12H7l-3 4v-4H0z" fill="#fff" /><path d="M3 3h11M3 6h11M3 9h7" stroke="#000" /></Svg>
          <span className="absolute left-2 top-[7px] flex size-4 items-center justify-center rounded-full bg-[#3b3b3b] text-[11px] font-bold ring-1 ring-[#777]">2</span>
        </span>
      </div>
    </footer>
  );
}

function StatusCell({ text, w }: { text: string; w: string }) {
  return <span className={`overflow-hidden border border-[#d4d4d4] bg-gradient-to-b from-white to-[#f0f0f0] pl-px ${w}`}><Song text={text} /></span>;
}

const title = "广联达BIM钢筋算量软件 GGJ2013 - [C:\\Users\\Administrator.PC-20141127NRHM\\Desktop\\白龙村-2016-08-25-13-27-07(2166版)_16G.GGJ12]";

export default function App() {
  return (
    <div className="relative flex h-screen flex-col overflow-hidden bg-[#f0f0f0] font-['Noto_Sans','Noto_Sans_CJK_SC',sans-serif] text-[12px] leading-4 text-black">
      <header className="flex h-[23px] shrink-0 items-center bg-white pl-0.5 pr-5 text-[#8c8c8c]">
        <GlodonLogo />
        <h1 className="whitespace-nowrap pl-[5px] font-['Inter','Noto_Sans_CJK_SC',sans-serif]">{title}</h1>
        <div className="ml-auto flex items-center gap-[34px]">
          <button aria-label="最小化"><Svg w={11} h={11}><path d="M0 5.500h11" stroke="#888" /></Svg></button>
          <button aria-label="还原"><Svg w={11} h={11}><path d="M.5 2.500h7v8h-7zM2.500 2.500v-2h8v8h-3" stroke="#888" /></Svg></button>
          <button aria-label="关闭"><Svg w={11} h={11}><path d="M.5.500l10 10M10.500.500l-10 10" stroke="#888" /></Svg></button>
        </div>
      </header>
      <MenuBar />
      <MainToolbar />
      <main className="flex min-h-0 flex-1">
        <NavPanel />
        <div className="flex min-w-0 flex-1 flex-col pl-1">
          <div className="flex h-7 shrink-0 items-center whitespace-nowrap bg-gradient-to-b from-[#fcfcfc] to-[#f0f0f0] pl-1">
            <button className="flex items-center gap-1"><NewPartIcon />新建<Caret /></button>
            <button className="flex items-center gap-1 pl-1"><Cross />删除</button>
            <button className="flex items-center gap-1 pl-1.5"><CopyIcon />复制</button>
          </div>
          <div className="flex min-h-0 flex-1">
            <PartsPanel />
            <div className="ml-1 mr-[3px] flex min-w-0 flex-1 border-b border-r border-[#c0c0c0] bg-white pb-[3px] pt-5">
              <SectionWindow />
              <div className="mr-px mt-1 flex border border-[#a0a0a0] border-l-white"><ScrollBar thumb="h-[384px]" /></div>
            </div>
          </div>
        </div>
      </main>
      <div className="flex h-5 shrink-0 gap-0.5">
        <StatusCell w="w-[148px]" text="" />
        <StatusCell w="w-[78px]" text="层高:2.8m" />
        <StatusCell w="w-[98px]" text="底标高:10.27m" />
        <StatusCell w="w-12" text="0" />
        <StatusCell w="flex-1" text="名称在当前层当前构件类型下不允许重名" />
        <StatusCell w="w-[70px]" text="723.8 FPS" />
      </div>
      <Taskbar />

      <PolygonEditor />
      <GridDialog />
      <ImeBar />
      <div className="absolute -top-8 left-[982px] flex size-[51px] items-end justify-center rounded-full border-2 border-[#c8d8cf] bg-[#4bcb66] pb-1 text-[12px] font-bold leading-3 text-white shadow-[inset_0_0_0_2px_#158f56,0_2px_8px_rgba(0,0,0,0.5)]">66</div>
      <svg width="460" height="270" viewBox="0 0 460 270" fill="none" className="pointer-events-none absolute left-0 top-0" aria-hidden="true">
        <path fillRule="evenodd" fill="#f00" d="M251 94a95.500 27 0 10191 0a95.500 27 0 10-191 0zM262 94a84.500 20.500 0 10169 0a84.500 20.500 0 10-169 0z" />
        <ellipse cx="146" cy="219" rx="84.500" ry="38.500" stroke="#f00" strokeWidth="7" />
      </svg>
    </div>
  );
}
